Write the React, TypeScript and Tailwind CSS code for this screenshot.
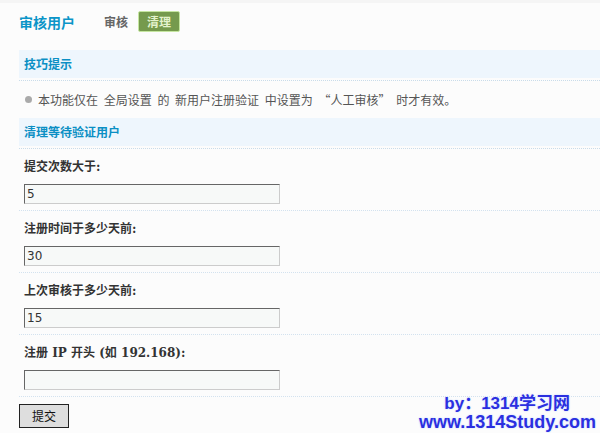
import React from "react";

const cjk = "font-['Noto_Sans_CJK_SC',sans-serif]";

const fields = [
  { label: "提交次数大于:", value: "5" },
  { label: "注册时间于多少天前:", value: "30" },
  { label: "上次审核于多少天前:", value: "15" },
  { label: "注册 IP 开头 (如 192.168):", value: "" },
];

const SectionBar: React.FC<{ title: string }> = ({ title }) => (
  <div className="border-b border-dotted border-[#c9dcea] pb-[2px]">
    <div className="h-[28px] bg-[#eef6fd] pl-[5px] flex items-center">
      <span className={`${cjk} text-[12px] font-bold text-[#0b8fc4]`}>{title}</span>
    </div>
  </div>
);

export default function App() {
  return (
    <div className={`relative w-[600px] h-[433px] overflow-hidden bg-[#fcfcfc] ${cjk} text-[12px]`}>
      {/* header */}
      <div className="h-[40px] border-t-[3px] border-[#f5f5f5] pl-[19px] flex items-center">
        <span className="text-[14px] font-bold text-[#0b95c8] leading-none">审核用户</span>
        <span className="ml-[29px] text-[12px] font-bold text-[#666]">审核</span>
        <span className="ml-[10px] h-[21px] w-[42px] rounded-[2px] border border-[#c5e6a0] bg-[#759a4d] text-[#e4f3cc] font-bold flex items-center justify-center">
          清理
        </span>
      </div>

      <div className="pl-[19px] mt-[10px]">
        <SectionBar title="技巧提示" />
        <div className="h-[37px] flex items-center pl-[6px] text-[#555]">
          <span className="w-[7px] h-[7px] rounded-full bg-[#aaa] mr-[6px]" />
          <span className="[word-spacing:3px]">本功能仅在 全局设置 的 新用户注册验证 中设置为 “人工审核” 时才有效。</span>
        </div>
        <SectionBar title="清理等待验证用户" />

        {fields.map((f) => (
          <div key={f.label} className="border-b border-dotted border-[#d3e2ef] pl-[5px] pt-[11px] pb-[6px]">
            <div className="h-[14px] leading-[14px] font-bold text-[#333] font-['DejaVu_Serif','Noto_Sans_CJK_SC',serif] text-[12px]">
              {f.label}
            </div>
            <input
              readOnly
              value={f.value}
              className="mt-[10px] block w-[256px] h-[20px] border border-t-[#666] border-l-[#666] border-b-[#ccc] border-r-[#ccc] bg-[#f7f9f8] px-[2px] text-[12px] text-[#333] font-['DejaVu_Sans',sans-serif] outline-none"
            />
          </div>
        ))}

        <button className="mt-[7px] w-[50px] h-[24px] border border-[#222] bg-[#dedede] text-[12px] text-[#111]">
          提交
        </button>
      </div>

      {/* watermark */}
      <div className="absolute right-[4px] bottom-[1px] flex flex-col items-end font-['Liberation_Sans','Noto_Sans_CJK_SC',sans-serif] font-bold text-[#2b2fe0] [text-shadow:0_0_2px_#d8e4ff,0_0_2px_#d8e4ff]">
        <span className="text-[17px] leading-[18px] mr-[26px]">by：1314学习网</span>
        <span className="text-[18px] leading-[19px]">www.1314Study.com</span>
      </div>
    </div>
  );
}
